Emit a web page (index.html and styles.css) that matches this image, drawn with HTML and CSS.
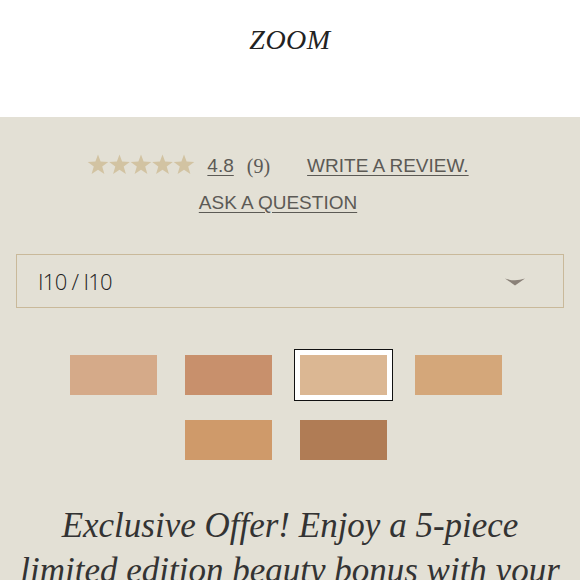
FILE: index.html
```html
<!DOCTYPE html>
<html>
  <head>
    <meta http-equiv="Content-Type" content="text/html; charset=utf-8"/>
    <link rel="stylesheet" href="styles.css">
  </head>
  <body>
    <div class="header">
      <div class="logo">ZOOM</div>
    </div>
    <div class="product">
      <div class="reviews">
        <svg class="stars" width="108" height="22" viewBox="0 0 108 22">
          <defs>
            <path id="star" d="M11 0.5 L13.6 7.6 L21.3 7.9 L15.2 12.6 L17.4 20 L11 15.7 L4.6 20 L6.8 12.6 L0.7 7.9 L8.4 7.6 Z"/>
          </defs>
          <g fill="#d2c3a2">
            <use href="#star" x="0"/>
            <use href="#star" x="21.5"/>
            <use href="#star" x="43"/>
            <use href="#star" x="64.5"/>
            <use href="#star" x="86"/>
          </g>
        </svg>
        <a class="link score">4.8</a>
        <span class="count">(9)</span>
        <a class="link write">WRITE A REVIEW.</a>
      </div>
      <div class="ask">
        <a class="link">ASK A QUESTION</a>
      </div>
      <div class="select">
        <span class="value">I10 / I10</span>
        <svg class="chevron" width="20" height="8" viewBox="0 0 20 8">
          <path d="M0 0.5 Q10 4 20 0.5 L10 7.5 Z" fill="#8a8178"/>
        </svg>
      </div>
      <div class="swatches">
        <div class="swatch"><div class="chip" style="background:#d5aa89"></div></div>
        <div class="swatch"><div class="chip" style="background:#c8906c"></div></div>
        <div class="swatch selected"><div class="chip" style="background:#dbb793"></div></div>
        <div class="swatch"><div class="chip" style="background:#d4a77a"></div></div>
        <div class="swatch"><div class="chip" style="background:#cf9a6a"></div></div>
        <div class="swatch"><div class="chip" style="background:#b07c55"></div></div>
      </div>
      <p class="offer">Exclusive Offer! Enjoy a 5-piece limited edition beauty bonus with your purchase.</p>
    </div>
  </body>
</html>
```

FILE: styles.css
```css
body {
  margin: 0px;
  padding: 0px;
  background: #e3e0d5;
  overflow: hidden;
}

.header {
  background: white;
  height: 117px;
  text-align: center;
}

.logo {
  padding-top: 24px;
  font-family: "Liberation Serif", serif;
  font-style: italic;
  font-size: 28px;
  letter-spacing: 0.5px;
  color: #222;
}

.product {
  padding: 34px 16px 0px 16px;
}

.reviews {
  display: flex;
  align-items: center;
  justify-content: center;
  height: 30px;
  padding-right: 24px;
  font-family: "Liberation Sans", sans-serif;
  font-size: 19px;
  color: #5c5a55;
}

.stars {
  margin-right: 12px;
  margin-top: -2px;
}

.link {
  color: #5c5a55;
  text-decoration: underline;
  text-underline-offset: 3px;
}

.count {
  font-family: "Liberation Serif", serif;
  font-size: 20px;
  margin-left: 13px;
  margin-right: 37px;
}

.ask {
  text-align: center;
  margin-top: 11px;
  padding-right: 24px;
  font-family: "Liberation Sans", sans-serif;
  font-size: 19px;
}

.select {
  margin-top: 40px;
  height: 52px;
  border: 1px solid #c9b99a;
  display: flex;
  align-items: center;
  justify-content: space-between;
  padding: 0px 38px 0px 21px;
}

.value {
  font-family: "Open Sans", sans-serif;
  font-weight: 300;
  font-size: 22px;
  letter-spacing: -0.7px;
  color: #222;
}

.chevron {
  margin-top: 2px;
}

.swatches {
  display: flex;
  flex-wrap: wrap;
  justify-content: center;
  gap: 13px 16px;
  margin-top: 41px;
  padding: 0px 42px 0px 34px;
}

.swatch {
  padding: 5px;
  border: 1px solid transparent;
}

.swatch.selected {
  background: white;
  border-color: #111;
}

.chip {
  width: 87px;
  height: 40px;
}

.offer {
  margin: 37px 0px 0px 0px;
  padding: 0px 2px;
  text-align: center;
  font-family: "Liberation Serif", serif;
  font-style: italic;
  font-size: 35px;
  line-height: 45px;
  color: #333;
}
```
